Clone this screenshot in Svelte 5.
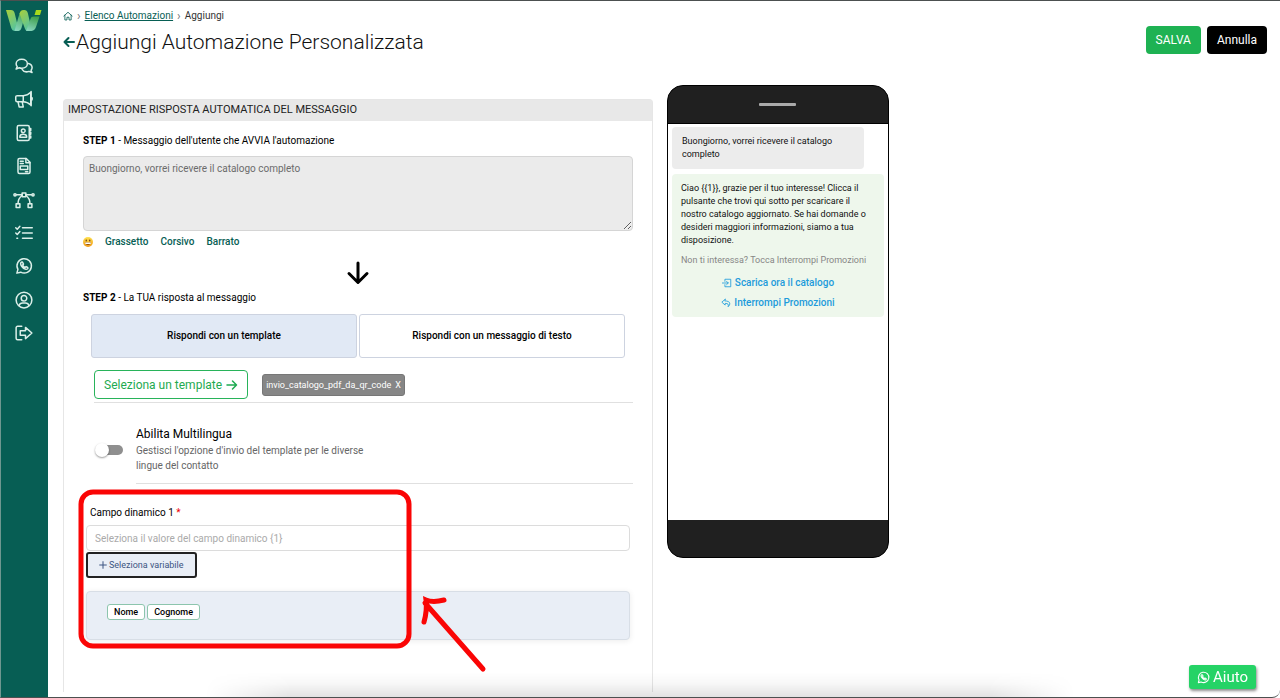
<script lang="ts">
  interface NavItem {
    label: string
    paths: string[]
  }

  const whatsapp = [
    'M2.5 21.5l1.4-5A9.6 9.6 0 1 1 7.6 20.2z',
    'M8.2 7.2c-1.6 1.5-.2 4.4 2 6.6s5 3.5 6.6 1.9c.7-.8.5-1.5-.3-2l-1.7-.9-1.3 1.2c-1.5-.6-2.7-1.8-3.3-3.3l1.1-1.2-.9-1.9c-.5-.9-1.4-1.1-2.2-.4z',
  ]

  const navItems: NavItem[] = [
    {
      label: 'Chat',
      paths: [
        'M9 3c4.4 0 7.5 2.6 7.5 6s-3.1 6-7.5 6c-1.2 0-2.3-.2-3.3-.6L1.5 16l1.4-3.2C2 11.8 1.5 10.4 1.5 9c0-3.4 3.1-6 7.5-6z',
        'M18 8.6c2.8.8 4.8 2.8 4.8 5.4 0 1.4-.5 2.6-1.4 3.6l1.3 3-4-1.4c-3.7 1.2-7.6 0-9.2-2.8',
      ],
    },
    {
      label: 'Campagne',
      paths: [
        'M3 7.5h8v8H3a2 2 0 0 1-2-2v-4a2 2 0 0 1 2-2z',
        'M11 7.5c4 0 7-1.5 10-4.5v17c-3-3-6-4.5-10-4.5',
        'M4 15.500l1.5 7H11l-1.5-7',
        'M21.5 2v19M21.5 9.5c2 0 2 4 0 4',
      ],
    },
    {
      label: 'Contatti',
      paths: [
        'M5 2h12a2 2 0 0 1 2 2v16a2 2 0 0 1-2 2H5a2 2 0 0 1-2-2V4a2 2 0 0 1 2-2z',
        'M11 6.5a2.5 2.5 0 1 1 0 5 2.5 2.5 0 0 1 0-5z',
        'M6.5 17.5v-1c0-2 2-3 4.5-3s4.5 1 4.5 3v1z',
        'M19.5 6H21v2.5h-1.5M19.5 11H21v2.5h-1.5M19.5 16H21v2.5h-1.5',
      ],
    },
    {
      label: 'Template',
      paths: [
        'M6 2h9l5 5v13a2 2 0 0 1-2 2H6a2 2 0 0 1-2-2V4a2 2 0 0 1 2-2z',
        'M14.5 2v5.5H20M7 5.5h4M7 8.5h4M7 12h10v4.5H7zM14 19.5h3',
      ],
    },
    {
      label: 'Flussi',
      paths: [
        'M9.5 2.5h5v5h-5zM1.5 17h5v5h-5zM17.5 17h5v5h-5z',
        'M9.5 5H2M14.5 5H22M9.5 6C6.500 8 4 12 4 17M14.5 6c3 2 5.5 6 5.5 11',
        'M0 3.5a1.5 1.5 0 1 1 0 3 1.5 1.5 0 0 1 0-3zM24 3.5a1.5 1.5 0 1 1 0 3 1.5 1.5 0 0 1 0-3z',
      ],
    },
    {
      label: 'Automazioni',
      paths: ['M10 5h13M10 12h13M10 19h13', 'M1 5l2 2 3.500-4M1 12l2 2 3.500-4M2.500 19h1'],
    },
    { label: 'WhatsApp', paths: whatsapp },
    {
      label: 'Profilo',
      paths: [
        'M12 1.5a10.5 10.5 0 1 1 0 21 10.5 10.5 0 0 1 0-21z',
        'M12 6a3.7 3.7 0 1 1 0 7.4A3.7 3.7 0 0 1 12 6z',
        'M5.5 19.5c.6-2.6 2.5-3.6 4.5-3.6h4c2 0 3.9 1 4.5 3.6',
      ],
    },
    {
      label: 'Esci',
      paths: ['M9 3H3.5A2 2 0 0 0 1.5 5v14a2 2 0 0 0 2 2H9', 'M7 9h7V4.5l8.5 7.5-8.5 7.5V15H7z'],
    },
  ]

  const modes = ['Rispondi con un template', 'Rispondi con un messaggio di testo']
  const formats = ['Grassetto', 'Corsivo', 'Barrato']
  const variables = ['Nome', 'Cognome']

  let trigger = $state('Buongiorno, vorrei ricevere il catalogo completo')
  let selectedMode = $state(0)
  let template = $state('invio_catalogo_pdf_da_qr_code')
  let multilingual = $state(false)
  let fieldValue = $state('')
</script>

{#snippet icon(paths: string[])}
  <svg class="icon" viewBox="0 0 24 24" aria-hidden="true">
    {#each paths as d}
      <path {d} />
    {/each}
  </svg>
{/snippet}

<div class="app">
  <aside class="sidebar">
    <a class="sidebar__logo" href="#home" aria-label="Home">
      <svg viewBox="0 0 36 24" aria-hidden="true">
        <defs>
          <linearGradient id="logo-a" x1="0" y1="0" x2="0.6" y2="1">
            <stop offset="0" stop-color="#a9cf3a" />
            <stop offset="1" stop-color="#55c4a0" />
          </linearGradient>
          <linearGradient id="logo-b" x1="0.6" y1="0" x2="0.3" y2="1">
            <stop offset="0" stop-color="#3f9f4c" />
            <stop offset="1" stop-color="#86d6bb" />
          </linearGradient>
        </defs>
        <path d="M0 1h5c2 0 3 1 3.600 3L13 22H9.500c-2.500 0-3.700-1-4.400-3.500z" fill="url(#logo-a)" />
        <path d="M8.500 22l5-17.500C14.300 2 16 1 19 1l-1 9-2.500 9c-.7 2-1.700 3-3.500 3z" fill="url(#logo-b)" />
        <path d="M13.500 4.500C14.300 2 15.700 1 18 1c2.300 0 3.200 1 3.800 3L26 22h-3.500c-2.500 0-3.300-1-4-3.500z" fill="url(#logo-a)" />
        <path d="M20 22l4.500-12c.6-1.800 1.600-2.500 3.500-2.500h5.500L30 18c-.9 2.900-2.500 4-5.500 4z" fill="url(#logo-b)" />
        <path d="M30 1h5.500L34 6h-5.500z" fill="#a8d91c" />
      </svg>
    </a>
    <nav class="sidebar__nav" aria-label="Menu principale">
      {#each navItems as item (item.label)}
        <a class="sidebar__link" href="#{item.label}" aria-label={item.label}>
          {@render icon(item.paths)}
        </a>
      {/each}
    </nav>
  </aside>

  <main class="main">
    <header class="header">
      <div class="header__text">
        <nav class="breadcrumb" aria-label="Percorso">
          <a class="breadcrumb__home" href="#home" aria-label="Home">
            {@render icon(['M2 12L12 3l10 9', 'M4.5 10v11.5h5V15h5v6.5h5V10'])}
          </a>
          <span class="breadcrumb__sep">›</span>
          <a href="#automazioni">Elenco Automazioni</a>
          <span class="breadcrumb__sep">›</span>
          <span>Aggiungi</span>
        </nav>
        <h1 class="title">
          <a class="title__back" href="#automazioni" aria-label="Indietro">
            {@render icon(['M22 12H3M11 4l-8 8 8 8'])}
          </a>
          Aggiungi Automazione Personalizzata
        </h1>
      </div>
      <div class="header__actions">
        <button class="action action--save">SALVA</button>
        <button class="action action--cancel">Annulla</button>
      </div>
    </header>

    <div class="columns">
      <section class="panel">
        <h2 class="panel__head">IMPOSTAZIONE RISPOSTA AUTOMATICA DEL MESSAGGIO</h2>
        <div class="panel__body">
          <label class="step" for="trigger">
            <strong>STEP 1</strong> - Messaggio dell'utente che AVVIA l'automazione
          </label>
          <textarea id="trigger" class="trigger" bind:value={trigger}></textarea>

          <div class="formats">
            <button class="formats__emoji" aria-label="Emoji">
              <svg viewBox="0 0 20 20" aria-hidden="true">
                <defs>
                  <linearGradient id="face" x1="0" y1="0" x2="0" y2="1">
                    <stop offset="0" stop-color="#ffe14d" />
                    <stop offset="1" stop-color="#f09a1a" />
                  </linearGradient>
                </defs>
                <circle cx="10" cy="10" r="10" fill="url(#face)" />
                <ellipse cx="6.5" cy="7" rx="1.3" ry="2" fill="#6b3d10" />
                <ellipse cx="13.5" cy="7" rx="1.3" ry="2" fill="#6b3d10" />
                <path d="M4 11h12c0 3-2.5 5-6 5s-6-2-6-5z" fill="#8a4a16" />
                <path d="M4.5 11h11v3h-11z" fill="#fff" />
              </svg>
            </button>
            {#each formats as format (format)}
              <button class="formats__button">{format}</button>
            {/each}
          </div>

          <svg class="down" viewBox="0 0 24 24" aria-hidden="true">
            <path d="M12 2v19M3 12.5l9 9 9-9" />
          </svg>

          <p class="step"><strong>STEP 2</strong> - La TUA risposta al messaggio</p>

          <div class="modes">
            {#each modes as mode, index (mode)}
              <button
                class="mode"
                class:mode--selected={index === selectedMode}
                aria-pressed={index === selectedMode}
                onclick={() => (selectedMode = index)}
              >
                {mode}
              </button>
            {/each}
          </div>

          <div class="template">
            <button class="template__select">
              Seleziona un template
              {@render icon(['M2 12h19M13 4l8 8-8 8'])}
            </button>
            {#if template}
              <button class="template__chip" onclick={() => (template = '')}>
                <span>{template}</span><span>X</span>
              </button>
            {/if}
          </div>

          <div class="multi">
            <input id="multi" class="switch" type="checkbox" role="switch" bind:checked={multilingual} />
            <div class="multi__text">
              <label class="multi__title" for="multi">Abilita Multilingua</label>
              <p class="multi__desc">
                Gestisci l'opzione d'invio del template per le diverse lingue del contatto
              </p>
            </div>
          </div>

          <div class="field">
            <label class="field__label" for="field">Campo dinamico 1 <span class="field__star">*</span></label>
            <input
              id="field"
              class="field__input"
              type="text"
              placeholder="Seleziona il valore del campo dinamico &#123;1&#125;"
              bind:value={fieldValue}
            />
            <button class="field__add">
              {@render icon(['M12 2v20M2 12h20'])}
              Seleziona variabile
            </button>
            <div class="variables">
              {#each variables as variable (variable)}
                <button class="variables__item" onclick={() => (fieldValue = variable)}>{variable}</button>
              {/each}
            </div>

            <!-- Highlight frame and hand-drawn arrow over the field -->
            <svg class="highlight" viewBox="0 0 410 184" aria-hidden="true">
              <rect x="2" y="2" width="328" height="154" rx="12" />
              <path d="M404 179L346 113M365 110c-8 2-13 2-18 0c1 8 0 15-2 22" />
            </svg>
          </div>
        </div>
      </section>

      <section class="phone" aria-label="Anteprima">
        <div class="phone__top"><span class="phone__speaker"></span></div>
        <div class="phone__screen">
          <p class="bubble bubble--user">{trigger}</p>
          <div class="bubble bubble--reply">
            <p>
              Ciao {'{{1}}'}, grazie per il tuo interesse! Clicca il pulsante che trovi qui sotto per
              scaricare il nostro catalogo aggiornato. Se hai domande o desideri maggiori
              informazioni, siamo a tua disposizione.
            </p>
            <p class="bubble__footer">Non ti interessa? Tocca Interrompi Promozioni</p>
            <a class="bubble__action" href="#catalogo">
              {@render icon(['M7 8V3h14v18H7v-5', 'M1 12h14M11 8l4 4-4 4'])}
              Scarica ora il catalogo
            </a>
            <a class="bubble__action" href="#interrompi">
              {@render icon(['M10 3L2 10l8 7v-4c7 0 9 2 7 8 6-5 7-14-7-14z'])}
              Interrompi Promozioni
            </a>
          </div>
        </div>
        <div class="phone__bottom"></div>
      </section>
    </div>
  </main>

  <a class="help" href="#aiuto">
    {@render icon(whatsapp)}
    Aiuto
  </a>
  <div class="shade"></div>
  <div class="frame"></div>
</div>

<style>
  :global(body) {
    background: #fff;
    color: #111;
    font-family: Roboto, 'Liberation Sans', sans-serif;
    font-size: 10px;
    line-height: 14px;
  }

  h1,
  h2,
  p {
    margin: 0;
    font-weight: 400;
  }

  button,
  input,
  textarea {
    box-sizing: border-box;
    margin: 0;
    font: inherit;
  }

  button {
    padding: 0;
    border: 0;
    background: none;
    color: inherit;
    cursor: pointer;
  }

  strong {
    font-weight: 700;
  }

  .icon {
    display: block;
    flex: none;
    width: 20px;
    height: 20px;
    overflow: visible;
    fill: none;
    stroke: currentColor;
    stroke-width: 2;
    stroke-linecap: round;
    stroke-linejoin: round;
  }

  .app {
    display: flex;
    min-height: 100vh;
  }

  /* Sidebar */
  .sidebar {
    flex: none;
    width: 48px;
    background: #075e54;
    color: #dcefe9;
  }

  .sidebar__logo {
    display: block;
    width: 36px;
    margin: 9px 6px 0;
  }

  .sidebar__logo svg {
    display: block;
  }

  .sidebar__nav {
    display: flex;
    flex-direction: column;
    align-items: center;
    justify-content: space-between;
    height: 287px;
    margin-top: 23px;
  }

  .sidebar__link {
    color: inherit;
  }

  .sidebar__link .icon {
    width: 18px;
    height: 18px;
    margin: 1px;
  }

  /* Header */
  .main {
    flex: 1;
    min-width: 0;
    padding: 9px 13px 0 15px;
  }

  .header {
    display: flex;
    justify-content: space-between;
    margin-bottom: 43px;
  }

  .breadcrumb {
    display: flex;
    align-items: center;
    gap: 4px;
    color: #333;
  }

  .breadcrumb a {
    color: #075e54;
  }

  .breadcrumb__home .icon {
    width: 10px;
    height: 10px;
  }

  .breadcrumb__sep {
    color: #777;
    font-size: 12px;
  }

  .title {
    display: flex;
    align-items: center;
    gap: 1px;
    margin-top: 5px;
    font-size: 21px;
    font-weight: 300;
    line-height: 28px;
  }

  .title__back {
    color: #075e54;
  }

  .title__back .icon {
    width: 12px;
    height: 12px;
    stroke-width: 4;
  }

  .header__actions {
    display: flex;
    align-items: flex-end;
    gap: 6px;
    padding-top: 17px;
    height: 28px;
  }

  .action {
    height: 28px;
    padding: 0 10px;
    border-radius: 4px;
    color: #fff;
    font-size: 12px;
  }

  .action--save {
    background: #1eb253;
  }

  .action--cancel {
    background: #000;
  }

  /* Settings panel */
  .columns {
    display: grid;
    grid-template-columns: 49% auto;
    justify-content: start;
    align-items: start;
    gap: 14px;
  }

  .panel {
    min-height: 593px;
    box-sizing: border-box;
    border: 1px solid #e6e6e6;
    border-bottom: 0;
    border-radius: 4px 4px 0 0;
  }

  .panel__head {
    padding: 3px 4px 4px;
    background: #e8e8e8;
    color: #222;
    font-size: 11px;
  }

  .panel__body {
    padding: 13px 19px 0;
  }

  .step {
    display: block;
    color: #000;
  }

  .trigger {
    display: block;
    width: 100%;
    height: 75px;
    margin-top: 8px;
    padding: 5px;
    border: 1px solid #d5d5d5;
    border-radius: 4px;
    background: #ebebeb;
    color: #6b6b6b;
    resize: vertical;
  }

  .formats {
    display: flex;
    align-items: center;
    gap: 12px;
    margin-top: 4px;
  }

  .formats__emoji {
    width: 10px;
    height: 10px;
  }

  .formats__emoji svg {
    display: block;
  }

  .formats__button {
    color: #075e54;
    font-weight: 500;
  }

  .down {
    display: block;
    width: 24px;
    height: 24px;
    margin: 12px auto 6px;
    fill: none;
    stroke: #000;
    stroke-width: 3;
    stroke-linecap: round;
    stroke-linejoin: round;
  }

  .modes {
    display: grid;
    grid-template-columns: 1fr 1fr;
    gap: 2px;
    margin: 9px 8px 0;
  }

  .mode {
    height: 44px;
    border: 1px solid #cdd3e0;
    border-radius: 3px;
    color: #000;
    font-weight: 500;
  }

  .mode--selected {
    background: #e1e9f5;
  }

  .template {
    display: flex;
    align-items: center;
    gap: 14px;
    margin: 12px 0 0 11px;
    padding-bottom: 3px;
    border-bottom: 1px solid #e0e0e0;
  }

  .template__select {
    display: flex;
    align-items: center;
    gap: 4px;
    height: 29px;
    padding: 0 9px;
    border: 1px solid #28b35a;
    border-radius: 4px;
    color: #1eaa50;
    font-size: 12px;
  }

  .template__select .icon {
    width: 12px;
    height: 12px;
    stroke-width: 3;
  }

  .template__chip {
    display: flex;
    align-items: center;
    gap: 4px;
    height: 22px;
    padding: 0 3px;
    border: 1px solid #777;
    border-radius: 3px;
    background: #868686;
    color: #fff;
    font-size: 9px;
  }

  .multi {
    display: flex;
    gap: 13px;
    margin: 23px 0 0 12px;
  }

  .switch {
    flex: none;
    position: relative;
    width: 28px;
    height: 16px;
    margin-top: 16px;
    appearance: none;
    cursor: pointer;
  }

  .switch::before {
    content: '';
    position: absolute;
    inset: 3px 0 3px 4px;
    border-radius: 5px;
    background: #8f8f8f;
  }

  .switch::after {
    content: '';
    position: absolute;
    top: 1px;
    left: 0;
    width: 14px;
    height: 14px;
    border-radius: 50%;
    background: #fff;
    box-shadow: 0 1px 2px rgba(0, 0, 0, 0.4);
  }

  .switch:checked::before {
    background: #28b35a;
  }

  .switch:checked::after {
    left: 14px;
  }

  .multi__text {
    flex: 1;
    padding-bottom: 10px;
    border-bottom: 1px solid #e0e0e0;
  }

  .multi__title {
    display: block;
    color: #000;
    font-size: 12px;
    line-height: 17px;
  }

  .multi__desc {
    max-width: 250px;
    color: #666;
    line-height: 15px;
  }

  /* Dynamic field */
  .field {
    position: relative;
    margin: 22px 3px 0;
  }

  .field__label {
    display: block;
    margin-left: 4px;
    color: #000;
  }

  .field__star {
    color: #f00000;
  }

  .field__input {
    display: block;
    width: 100%;
    height: 26px;
    margin-top: 5px;
    padding: 0 8px;
    border: 1px solid #dcdcdc;
    border-radius: 4px;
  }

  .field__input::placeholder {
    color: #aaa;
  }

  .field__add {
    display: flex;
    align-items: center;
    gap: 2px;
    height: 26px;
    margin-top: 1px;
    padding: 0 11px;
    border: 2px solid #222;
    border-radius: 3px;
    background: #e9eef6;
    color: #3c5582;
    font-size: 9px;
  }

  .field__add .icon {
    width: 8px;
    height: 8px;
    stroke-width: 3;
  }

  .variables {
    display: flex;
    gap: 2px;
    margin-top: 13px;
    padding: 12px 20px 19px;
    border: 1px solid #d8dee6;
    border-radius: 4px;
    background: #e9eef6;
    box-shadow: 0 1px 6px rgba(0, 0, 0, 0.08);
  }

  .variables__item {
    height: 16px;
    padding: 0 6px;
    border: 1px solid #8cc5ad;
    border-radius: 3px;
    background: #fff;
    color: #000;
    font-size: 9px;
    font-weight: 500;
  }

  .highlight {
    position: absolute;
    top: -16px;
    left: -7px;
    width: 410px;
    height: 184px;
    overflow: visible;
    fill: none;
    stroke: #fa0505;
    stroke-width: 5;
    stroke-linecap: round;
    pointer-events: none;
  }

  /* Phone preview */
  .phone {
    width: 222px;
    margin-top: -14px;
    box-sizing: border-box;
    border: 1px solid #000;
    border-radius: 16px;
    background: #202020;
    overflow: hidden;
  }

  .phone__top {
    display: flex;
    align-items: center;
    justify-content: center;
    height: 37px;
    border-bottom: 1px solid #000;
  }

  .phone__speaker {
    width: 37px;
    height: 3px;
    border-radius: 1px;
    background: #aaa;
  }

  .phone__screen {
    min-height: 390px;
    padding: 3px 4px;
    background: #fff;
  }

  .phone__bottom {
    height: 37px;
  }

  .bubble {
    border-radius: 4px;
    font-size: 9px;
    line-height: 13px;
  }

  .bubble--user {
    width: 172px;
    padding: 8px 10px;
    background: #ececec;
  }

  .bubble--reply {
    margin-top: 5px;
    padding: 8px 9px;
    background: #eef7ec;
  }

  .bubble__footer {
    margin: 7px 0 9px;
    color: #868686;
  }

  .bubble__action {
    display: flex;
    align-items: center;
    justify-content: center;
    gap: 3px;
    margin-top: 7px;
    color: #1d9bdb;
    font-size: 10px;
    font-weight: 500;
    text-decoration: none;
  }

  .bubble__action .icon {
    width: 10px;
    height: 10px;
  }

  /* Floating help link */
  .help {
    position: fixed;
    right: 24px;
    bottom: 9px;
    z-index: 2;
    display: flex;
    align-items: center;
    gap: 3px;
    height: 24px;
    padding: 0 8px;
    border-radius: 3px;
    background: #25d366;
    box-shadow: 1px 2px 3px rgba(0, 0, 0, 0.45);
    color: #fff;
    font-size: 15px;
    text-decoration: none;
  }

  .help .icon {
    width: 13px;
    height: 13px;
  }

  .shade {
    position: fixed;
    right: 16%;
    bottom: 0;
    left: 16%;
    height: 26px;
    background: linear-gradient(to top, rgba(0, 0, 0, 0.12), rgba(0, 0, 0, 0.03) 55%, transparent);
    mask-image: linear-gradient(to right, transparent, #000 10%, #000 90%, transparent);
    pointer-events: none;
  }

  .frame {
    position: fixed;
    inset: 0;
    border: 1px solid #4c5050;
    border-right: 0;
    border-left-color: #6f9790;
    border-bottom-right-radius: 8px;
    pointer-events: none;
  }
</style>
